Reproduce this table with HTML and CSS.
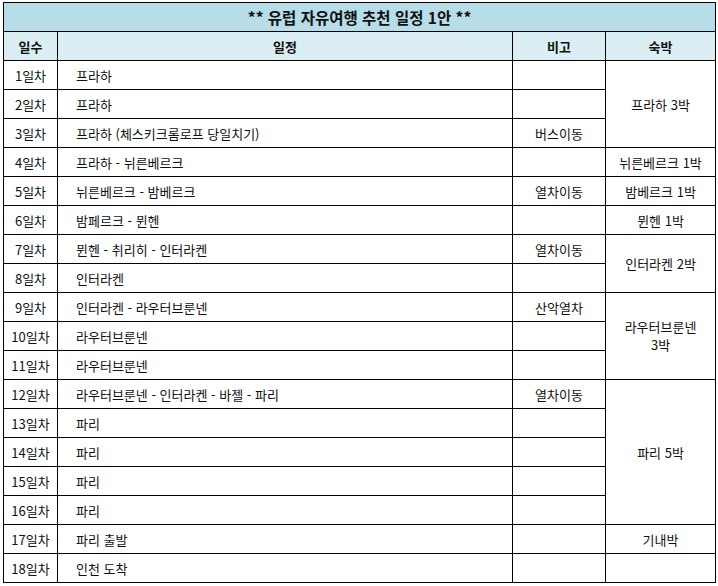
FILE: index.html
```html
<!DOCTYPE html>
<html lang="ko">
<head>
<meta charset="utf-8">
<link rel="stylesheet" href="styles.css">
</head>
<body>
<div class="wrap">
<table class="plan">
<colgroup>
<col class="c-day"><col class="c-plan"><col class="c-note"><col class="c-stay">
</colgroup>
<thead>
<tr class="title"><th colspan="4">** 유럽 자유여행 추천 일정 1안 **</th></tr>
<tr class="head"><th>일수</th><th>일정</th><th>비고</th><th>숙박</th></tr>
</thead>
<tbody>
<tr><td class="day">1일차</td><td class="plan-t">프라하</td><td class="note"></td><td class="stay" rowspan="3">프라하 3박</td></tr>
<tr><td class="day">2일차</td><td class="plan-t">프라하</td><td class="note"></td></tr>
<tr><td class="day">3일차</td><td class="plan-t">프라하 (체스키크롬로프 당일치기)</td><td class="note">버스이동</td></tr>
<tr><td class="day">4일차</td><td class="plan-t">프라하 - 뉘른베르크</td><td class="note"></td><td class="stay">뉘른베르크 1박</td></tr>
<tr><td class="day">5일차</td><td class="plan-t">뉘른베르크 - 밤베르크</td><td class="note">열차이동</td><td class="stay">밤베르크 1박</td></tr>
<tr><td class="day">6일차</td><td class="plan-t">밤페르크 - 뮌헨</td><td class="note"></td><td class="stay">뮌헨 1박</td></tr>
<tr><td class="day">7일차</td><td class="plan-t">뮌헨 - 취리히 - 인터라켄</td><td class="note">열차이동</td><td class="stay" rowspan="2">인터라켄 2박</td></tr>
<tr><td class="day">8일차</td><td class="plan-t">인터라켄</td><td class="note"></td></tr>
<tr><td class="day">9일차</td><td class="plan-t">인터라켄 - 라우터브룬넨</td><td class="note">산악열차</td><td class="stay wrap2" rowspan="3">라우터브룬넨<br>3박</td></tr>
<tr><td class="day">10일차</td><td class="plan-t">라우터브룬넨</td><td class="note"></td></tr>
<tr><td class="day">11일차</td><td class="plan-t">라우터브룬넨</td><td class="note"></td></tr>
<tr><td class="day">12일차</td><td class="plan-t">라우터브룬넨 - 인터라켄 - 바젤 - 파리</td><td class="note">열차이동</td><td class="stay" rowspan="5">파리 5박</td></tr>
<tr><td class="day">13일차</td><td class="plan-t">파리</td><td class="note"></td></tr>
<tr><td class="day">14일차</td><td class="plan-t">파리</td><td class="note"></td></tr>
<tr><td class="day">15일차</td><td class="plan-t">파리</td><td class="note"></td></tr>
<tr><td class="day">16일차</td><td class="plan-t">파리</td><td class="note"></td></tr>
<tr><td class="day">17일차</td><td class="plan-t">파리 출발</td><td class="note"></td><td class="stay">기내박</td></tr>
<tr><td class="day">18일차</td><td class="plan-t">인천 도착</td><td class="note"></td><td class="stay"></td></tr>
</tbody>
</table>
</div>
</body>
</html>
```

FILE: styles.css
```css
html, body {
  margin: 0;
  padding: 0;
  background: #ffffff;
}
.wrap {
  padding: 2px 0 0 3px;
}
.plan {
  border-collapse: collapse;
  table-layout: fixed;
  width: 712px;
  font-family: "Noto Sans CJK KR", "Noto Sans", sans-serif;
  font-size: 13px;
  color: #111111;
}
.c-day { width: 54px; }
.c-plan { width: 455px; }
.c-note { width: 93px; }
.c-stay { width: 110px; }
.plan th, .plan td {
  border: 1px solid #000000;
  padding: 0;
  height: 28px;
  line-height: 17px;
  vertical-align: middle;
  white-space: nowrap;
  overflow: visible;
}
.title th {
  background: #b7dde8;
  font-size: 15.5px;
  font-weight: bold;
  text-align: center;
}
.head th {
  background: #daeef3;
  font-weight: bold;
  text-align: center;
}
.day { text-align: center; }
.plan-t { text-align: left; padding-left: 18px !important; }
.note { text-align: center; }
.stay { text-align: center; }
.wrap2 { line-height: 18px !important; }
```
